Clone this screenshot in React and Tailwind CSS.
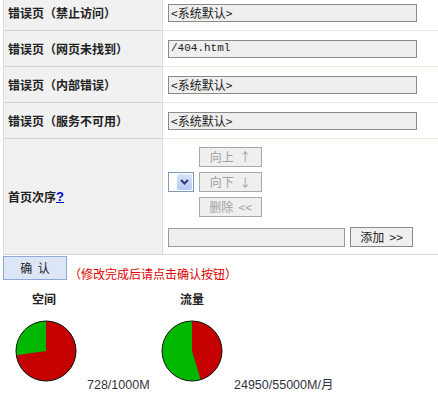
import React from "react";

const cjk = { fontFamily: '"Noto Sans CJK SC", "Liberation Sans", sans-serif' };

const Pie = ({ ratio }) => {
    const r = 30;
    const c = 31;
    const a = ratio * 2 * Math.PI;
    const x = c + r * Math.sin(a);
    const y = c - r * Math.cos(a);
    const large = ratio > 0.5 ? 1 : 0;
    return (
        <svg width="62" height="62" viewBox="0 0 62 62">
            <circle cx={c} cy={c} r={r} fill="#00b800" />
            <path d={`M${c} ${c} L${c} ${c - r} A${r} ${r} 0 ${large} 1 ${x} ${y} Z`} fill="#c40000" />
            <circle cx={c} cy={c} r={r} fill="none" stroke="#111" strokeWidth="1" />
        </svg>
    );
};

const rows = [
    { label: "错误页（禁止访问）", value: "<系统默认>" },
    { label: "错误页（网页未找到）", value: "/404.html", mono: true },
    { label: "错误页（内部错误）", value: "<系统默认>" },
    { label: "错误页（服务不可用）", value: "<系统默认>" },
];

const GrayBtn = ({ children }) => (
    <div className="w-[63px] h-[20px] border border-[#a8a8a8] bg-[#efefef] text-[#a0a0a0] text-[12px] flex items-center justify-center">
        {children}
    </div>
);

export default function App() {
    return (
        <div className="w-[438px] h-[396px] bg-white overflow-hidden text-[#333]" style={cjk}>
            <div className="-mt-[5px] ml-[3px]">
                {rows.map((row) => (
                    <div key={row.label} className="flex h-[36px]">
                        <div className="w-[160px] shrink-0 bg-[#f1f1f1] border-l border-r border-b border-l-[#dcdcdc] border-r-[#dcdcdc] border-b-[#d6d6d6] flex items-center pl-[4px] text-[12px] font-bold text-[#222]">
                            {row.label}
                        </div>
                        <div className="flex-1 border-b border-[#ebebdf] flex items-center pl-[5px]">
                            <div
                                className={`w-[249px] h-[18px] border border-[#8a8a8a] bg-[#efefef] flex items-center pl-[2px] text-[#222] ${row.mono ? "text-[11px]" : "text-[12px]"}`}
                                style={row.mono ? { fontFamily: '"Liberation Mono", monospace' } : undefined}
                            >
                                {row.value}
                            </div>
                        </div>
                    </div>
                ))}
                <div className="flex h-[116px]">
                    <div className="w-[160px] shrink-0 bg-[#f1f1f1] border-l border-r border-b border-l-[#dcdcdc] border-r-[#dcdcdc] border-b-[#d6d6d6] flex items-center pl-[4px] text-[12px] font-bold text-[#222]">
                        首页次序
                        <span className="text-[#0000cc] underline text-[13px] font-bold" style={{ fontFamily: '"Liberation Sans", sans-serif' }}>?</span>
                    </div>
                    <div className="flex-1 border-b border-[#d6d6d6] pl-[5px] pt-[8px]">
                        <div className="flex items-center gap-[5px]">
                            <div className="w-[26px] h-[20px] border border-[#7f9db9] bg-white flex items-center justify-end pr-[1px]">
                                <div className="w-[15px] h-[16px] bg-gradient-to-b from-[#d8e4fb] to-[#b4c8f4] rounded-[2px] flex items-center justify-center">
                                    <svg width="9" height="6" viewBox="0 0 9 6">
                                        <path d="M1 1 L4.5 4.5 L8 1" fill="none" stroke="#2b3f7a" strokeWidth="2" />
                                    </svg>
                                </div>
                            </div>
                            <div className="flex flex-col gap-[5px]">
                                <GrayBtn>向上&nbsp;&nbsp;↑</GrayBtn>
                                <GrayBtn>向下&nbsp;&nbsp;↓</GrayBtn>
                                <GrayBtn>删除&nbsp;&nbsp;&lt;&lt;</GrayBtn>
                            </div>
                        </div>
                        <div className="flex items-center gap-[5px] mt-[10px]">
                            <div className="w-[177px] h-[19px] border border-[#9a9a9a] bg-[#efefef]" />
                            <div className="w-[63px] h-[20px] border border-[#888] bg-[#f0f0f0] text-[12px] text-[#222] flex items-center justify-center">
                                添加&nbsp;&nbsp;&gt;&gt;
                            </div>
                        </div>
                    </div>
                </div>
            </div>

            <div className="flex items-end ml-[3px] mt-[1px]">
                <div className="w-[64px] h-[24px] bg-[#dde6f7] border border-[#8fa8d8] text-[12px] text-[#222] flex items-center justify-center">
                    确&nbsp;&nbsp;认
                </div>
                <div className="text-[12px] text-[#dd0000] ml-[2px] leading-[14px] mb-[-1px]">（修改完成后请点击确认按钮）</div>
            </div>

            <div className="flex ml-[15px] mt-[12px]">
                <div className="w-[146px] shrink-0 flex items-end">
                    <div className="w-[62px] flex flex-col items-center pb-[10px]">
                        <div className="text-[12px] font-bold text-[#222] leading-[14px] ml-[-4px]">空间</div>
                        <div className="mt-[14px]"><Pie ratio={728 / 1000} /></div>
                    </div>
                    <div className="ml-[10px] text-[12.5px] leading-[14px] text-[#333340]" style={{ fontFamily: '"Liberation Sans", sans-serif' }}>728/1000M</div>
                </div>
                <div className="w-[200px] shrink-0 flex items-end">
                    <div className="w-[62px] flex flex-col items-center pb-[10px]">
                        <div className="text-[12px] font-bold text-[#222] leading-[14px]">流量</div>
                        <div className="mt-[14px]"><Pie ratio={24950 / 55000} /></div>
                    </div>
                    <div className="ml-[11px] text-[12.5px] leading-[14px] text-[#333340]" style={{ fontFamily: '"Liberation Sans", "Noto Sans CJK SC", sans-serif' }}>24950/55000M/月</div>
                </div>
            </div>
        </div>
    );
}
